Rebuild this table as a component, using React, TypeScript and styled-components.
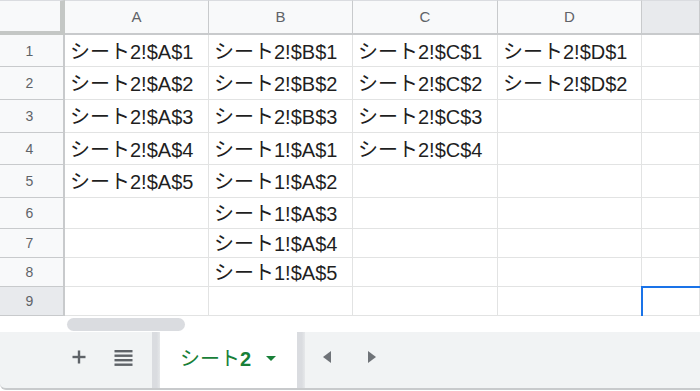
import React from "react";
import styled, { createGlobalStyle, css } from "styled-components";

const GlobalStyle = createGlobalStyle`
  html, body {
    margin: 0;
    padding: 0;
    background: #ffffff;
  }
  body {
    font-family: "Liberation Sans", "Noto Sans CJK JP", Arial, sans-serif;
  }
  * { box-sizing: border-box; }
`;

const Window = styled.div`
  width: 700px;
  height: 391px;
  display: flex;
  flex-direction: column;
  overflow: hidden;
  background: #ffffff;
`;

const Sheet = styled.div`
  display: grid;
  grid-template-columns: 65px 144px 144px 145px 144px 1fr;
  grid-template-rows: 35px 32px 33px 33px 32px 33px 31px 29px 29px 29px;
  height: 316px;
  overflow: hidden;
  flex: none;
`;

const Corner = styled.div`
  background: #f8f9fa;
  border-top: 1px solid #dadce0;
  border-right: 5px solid #c4c7c5;
  border-bottom: 4px solid #c4c7c5;
`;

const ColHeader = styled.div<{ $active?: boolean }>`
  display: flex;
  align-items: center;
  justify-content: center;
  padding-bottom: 1px;
  background: ${(p) => (p.$active ? "#e8eaed" : "#f8f9fa")};
  border-top: 1px solid #dadce0;
  border-right: 1px solid #c8cacc;
  border-bottom: 2px solid #c8cacc;
  font-size: 15px;
  color: #5f6368;
`;

const RowHeader = styled.div<{ $active?: boolean }>`
  display: flex;
  align-items: center;
  justify-content: center;
  padding-right: 4px;
  background: ${(p) => (p.$active ? "#e8eaed" : "#f8f9fa")};
  border-right: 2px solid #c8cacc;
  border-bottom: 1px solid #c8cacc;
  font-size: 14px;
  color: #5f6368;
`;

const Cell = styled.div<{ $selected?: boolean }>`
  position: relative;
  display: flex;
  align-items: center;
  padding: 0 0 1px 5px;
  border-right: 1px solid #e2e3e3;
  border-bottom: 1px solid #e2e3e3;
  font-family: "Liberation Sans", "Noto Sans CJK JP", Arial, sans-serif;
  font-size: 20px;
  color: #1f1f1f;
  white-space: nowrap;
  overflow: hidden;
  ${(p) =>
    p.$selected &&
    css`
      overflow: visible;
      &::after {
        content: "";
        position: absolute;
        top: -1px;
        left: -1px;
        right: -4px;
        bottom: -4px;
        border: 2px solid #1a73e8;
        pointer-events: none;
      }
    `}
`;

const ScrollStrip = styled.div`
  height: 16px;
  flex: none;
  display: flex;
  align-items: flex-start;
  padding: 2px 0 0 67px;
  background: #ffffff;
`;

const Thumb = styled.div`
  width: 118px;
  height: 13px;
  border-radius: 7px;
  background: #dadce0;
`;

const TabBar = styled.div`
  height: 58px;
  flex: none;
  display: flex;
  align-items: stretch;
  background: #f1f3f4;
  border-bottom: 2px solid #c8cacc;
  border-bottom-left-radius: 6px;
`;

const IconButton = styled.div<{ $ml: number; $w: number }>`
  width: ${(p) => p.$w}px;
  margin-left: ${(p) => p.$ml}px;
  display: flex;
  align-items: center;
  justify-content: center;
  padding-bottom: 6px;
  color: #5f6368;
`;

const Divider = styled.div`
  width: 8px;
  flex: none;
  background: linear-gradient(to right, #dadce0 0%, #dadce0 60%, #e6e8ea 100%);
`;

const Tab = styled.div`
  width: 137px;
  flex: none;
  display: flex;
  align-items: center;
  padding: 0 0 6px 20px;
  background: #ffffff;
  color: #188038;
  font-family: "Liberation Sans", "Noto Sans CJK JP", Arial, sans-serif;
  font-size: 20px;
`;

const TabName = styled.span`
  b {
    font-weight: 700;
  }
`;

const Caret = styled.span`
  margin-left: 15px;
  width: 0;
  height: 0;
  border-left: 5px solid transparent;
  border-right: 5px solid transparent;
  border-top: 5px solid #188038;
  margin-top: 3px;
`;

const Arrow = styled.span<{ $dir: "left" | "right"; $ml: number }>`
  align-self: center;
  margin-left: ${(p) => p.$ml}px;
  margin-bottom: 6px;
  width: 0;
  height: 0;
  border-top: 6.5px solid transparent;
  border-bottom: 6.5px solid transparent;
  ${(p) =>
    p.$dir === "left"
      ? css`border-right: 8px solid #6f7378;`
      : css`border-left: 8px solid #6f7378;`}
`;

const columns = ["A", "B", "C", "D", ""];

const rows: string[][] = [
  ["シート2!$A$1", "シート2!$B$1", "シート2!$C$1", "シート2!$D$1", ""],
  ["シート2!$A$2", "シート2!$B$2", "シート2!$C$2", "シート2!$D$2", ""],
  ["シート2!$A$3", "シート2!$B$3", "シート2!$C$3", "", ""],
  ["シート2!$A$4", "シート1!$A$1", "シート2!$C$4", "", ""],
  ["シート2!$A$5", "シート1!$A$2", "", "", ""],
  ["", "シート1!$A$3", "", "", ""],
  ["", "シート1!$A$4", "", "", ""],
  ["", "シート1!$A$5", "", "", ""],
  ["", "", "", "", ""],
];

const activeRow = 8;
const activeCol = 4;

const PlusIcon = () => (
  <svg width="14" height="14" viewBox="0 0 14 14">
    <rect x="5.8" y="0.5" width="2.4" height="13" fill="currentColor" />
    <rect x="0.5" y="5.8" width="13" height="2.4" fill="currentColor" />
  </svg>
);

const ListIcon = () => (
  <svg width="19" height="17" viewBox="0 0 19 17">
    <rect x="0.5" y="1" width="18" height="2.4" fill="currentColor" />
    <rect x="0.5" y="5.5" width="18" height="2.4" fill="currentColor" />
    <rect x="0.5" y="10" width="18" height="2.4" fill="currentColor" />
    <rect x="0.5" y="14.5" width="18" height="2.4" fill="currentColor" />
  </svg>
);

export default function App() {
  return (
    <>
      <GlobalStyle />
      <Window>
        <Sheet>
          <Corner />
          {columns.map((c, i) => (
            <ColHeader key={`h${i}`} $active={i === activeCol}>
              {c}
            </ColHeader>
          ))}
          {rows.map((r, ri) => (
            <React.Fragment key={`r${ri}`}>
              <RowHeader $active={ri === activeRow}>{ri + 1}</RowHeader>
              {r.map((v, ci) => (
                <Cell key={`c${ri}-${ci}`} $selected={ri === activeRow && ci === activeCol}>
                  {v}
                </Cell>
              ))}
            </React.Fragment>
          ))}
        </Sheet>
        <ScrollStrip>
          <Thumb />
        </ScrollStrip>
        <TabBar>
          <IconButton $ml={66} $w={26}>
            <PlusIcon />
          </IconButton>
          <IconButton $ml={18} $w={26}>
            <ListIcon />
          </IconButton>
          <IconButton $ml={0} $w={16} />
          <Divider />
          <Tab>
            <TabName>
              シート<b>2</b>
            </TabName>
            <Caret />
          </Tab>
          <Divider />
          <Arrow $dir="left" $ml={18} />
          <Arrow $dir="right" $ml={37} />
        </TabBar>
      </Window>
    </>
  );
}
